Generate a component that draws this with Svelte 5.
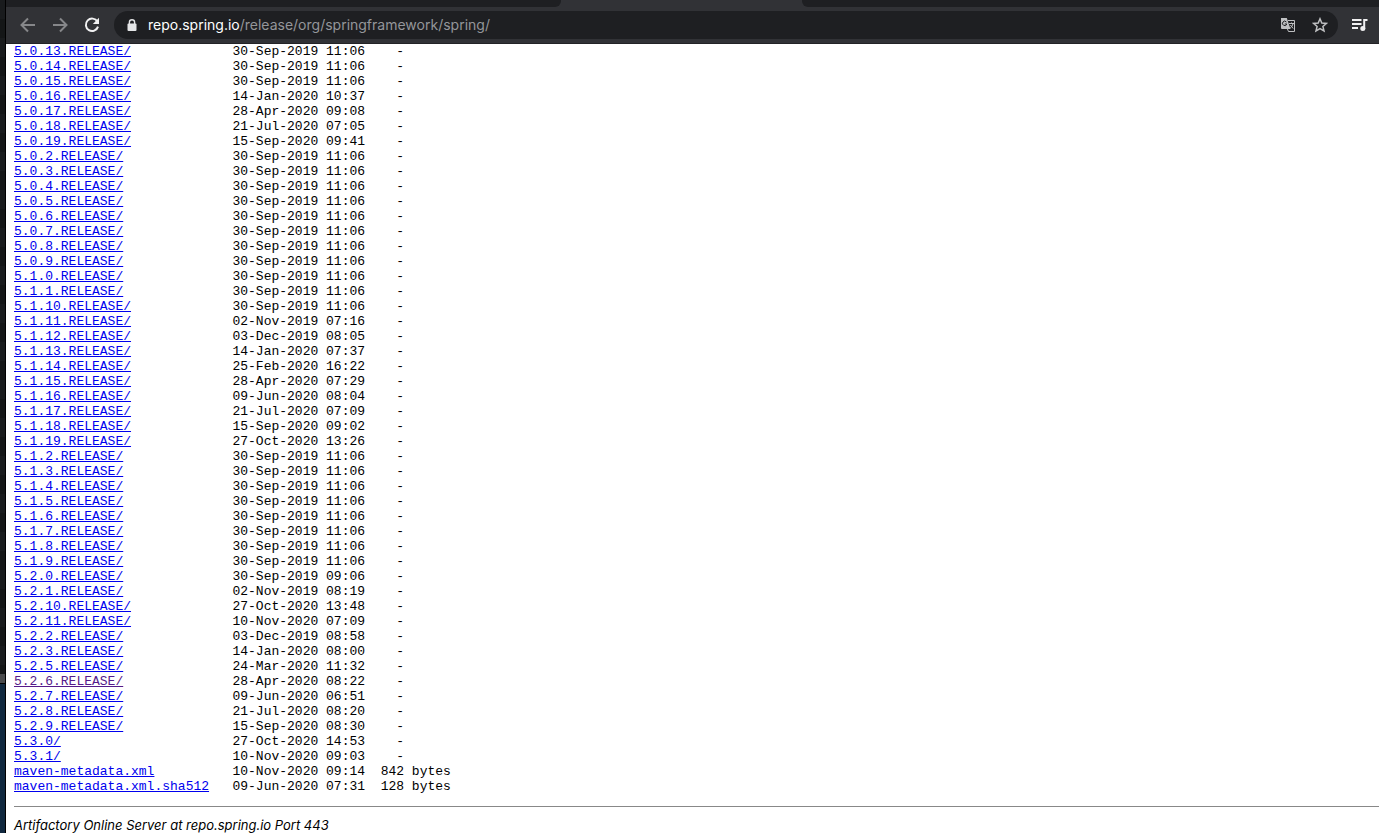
<script>
  const migrated = "30-Sep-2019 11:06";

  const entries = [
    ["5.0.13.RELEASE/", migrated],
    ["5.0.14.RELEASE/", migrated],
    ["5.0.15.RELEASE/", migrated],
    ["5.0.16.RELEASE/", "14-Jan-2020 10:37"],
    ["5.0.17.RELEASE/", "28-Apr-2020 09:08"],
    ["5.0.18.RELEASE/", "21-Jul-2020 07:05"],
    ["5.0.19.RELEASE/", "15-Sep-2020 09:41"],
    ["5.0.2.RELEASE/", migrated],
    ["5.0.3.RELEASE/", migrated],
    ["5.0.4.RELEASE/", migrated],
    ["5.0.5.RELEASE/", migrated],
    ["5.0.6.RELEASE/", migrated],
    ["5.0.7.RELEASE/", migrated],
    ["5.0.8.RELEASE/", migrated],
    ["5.0.9.RELEASE/", migrated],
    ["5.1.0.RELEASE/", migrated],
    ["5.1.1.RELEASE/", migrated],
    ["5.1.10.RELEASE/", migrated],
    ["5.1.11.RELEASE/", "02-Nov-2019 07:16"],
    ["5.1.12.RELEASE/", "03-Dec-2019 08:05"],
    ["5.1.13.RELEASE/", "14-Jan-2020 07:37"],
    ["5.1.14.RELEASE/", "25-Feb-2020 16:22"],
    ["5.1.15.RELEASE/", "28-Apr-2020 07:29"],
    ["5.1.16.RELEASE/", "09-Jun-2020 08:04"],
    ["5.1.17.RELEASE/", "21-Jul-2020 07:09"],
    ["5.1.18.RELEASE/", "15-Sep-2020 09:02"],
    ["5.1.19.RELEASE/", "27-Oct-2020 13:26"],
    ["5.1.2.RELEASE/", migrated],
    ["5.1.3.RELEASE/", migrated],
    ["5.1.4.RELEASE/", migrated],
    ["5.1.5.RELEASE/", migrated],
    ["5.1.6.RELEASE/", migrated],
    ["5.1.7.RELEASE/", migrated],
    ["5.1.8.RELEASE/", migrated],
    ["5.1.9.RELEASE/", migrated],
    ["5.2.0.RELEASE/", "30-Sep-2019 09:06"],
    ["5.2.1.RELEASE/", "02-Nov-2019 08:19"],
    ["5.2.10.RELEASE/", "27-Oct-2020 13:48"],
    ["5.2.11.RELEASE/", "10-Nov-2020 07:09"],
    ["5.2.2.RELEASE/", "03-Dec-2019 08:58"],
    ["5.2.3.RELEASE/", "14-Jan-2020 08:00"],
    ["5.2.5.RELEASE/", "24-Mar-2020 11:32"],
    ["5.2.6.RELEASE/", "28-Apr-2020 08:22"],
    ["5.2.7.RELEASE/", "09-Jun-2020 06:51"],
    ["5.2.8.RELEASE/", "21-Jul-2020 08:20"],
    ["5.2.9.RELEASE/", "15-Sep-2020 08:30"],
    ["5.3.0/", "27-Oct-2020 14:53"],
    ["5.3.1/", "10-Nov-2020 09:03"],
    ["maven-metadata.xml", "10-Nov-2020 09:14", "842 bytes"],
    ["maven-metadata.xml.sha512", "09-Jun-2020 07:31", "128 bytes"]
  ];

  let visited = $state(["5.2.6.RELEASE/"]);

  const open = (e, name) => {
    e.preventDefault();
    visited = [...visited, name];
  };
</script>

<div class="desktop">
  <div class="behind">
    <div class="editor"></div>
    <div class="edge"></div>
  </div>

  <div class="window">
    <div class="tabs">
      <div class="tab-left"></div>
      <div class="tab-active"></div>
      <div class="tab-right"></div>
    </div>

    <div class="toolbar">
      <div class="nav">
        <button class="dim" aria-label="Back">
          <svg width="16" height="16" viewBox="0 0 16 16"><path d="M15 8H2M8 1.5L1.5 8L8 14.5" /></svg>
        </button>
        <button class="dim" aria-label="Forward">
          <svg width="16" height="16" viewBox="0 0 16 16"><path d="M1 8H14M8 1.5L14.5 8L8 14.5" /></svg>
        </button>
        <button aria-label="Reload">
          <svg width="16" height="16" viewBox="0 0 16 16">
            <path d="M13.4 4.6A6.2 6.2 0 1 0 14 9.6" />
            <path class="solid" d="M15 0.8V7H8.8Z" />
          </svg>
        </button>
      </div>

      <div class="omnibox">
        <svg class="lock" width="10" height="13" viewBox="0 0 10 13">
          <path d="M2.4 5V3.3a2.6 2.6 0 0 1 5.2 0V5" />
          <rect x="0.5" y="4.5" width="9" height="7.5" rx="1" />
        </svg>
        <a class="url" href="#spring"><span class="host">repo.spring.io</span>/release/org/springframework/spring/</a>
        <button class="soft" aria-label="Translate this page">
          <svg width="16" height="16" viewBox="0 0 16 16">
            <path class="thin" d="M8 3.5H14.5V14.5H8.5L7 11" />
            <path class="solid" d="M1 1H6.8L10.5 12H2a1 1 0 0 1-1-1Z" />
            <path class="ink" d="M6.4 5A2.2 2.2 0 1 0 6.8 7H4.8" />
            <path class="thin" d="M9 6.5H14M11.5 5.5V6.5M13 6.5C12.6 8.7 11.6 10 10.2 11M10.4 8L13.2 11.5" />
          </svg>
        </button>
        <button class="soft" aria-label="Bookmark this page">
          <svg width="16" height="16" viewBox="0 0 16 16">
            <path class="star" d="M8 1.8L9.8 6L14.4 6.4L10.9 9.4L12 13.9L8 11.5L4 13.9L5.1 9.4L1.6 6.4L6.2 6Z" />
          </svg>
        </button>
      </div>

      <button class="media" aria-label="Media controls">
        <svg width="18" height="14" viewBox="0 0 18 14">
          <path d="M1 2H10.5M1 6H10.5M1 10H7M13.2 11V2H16.5" />
          <circle cx="11.8" cy="10.6" r="2.5" />
        </svg>
      </button>
    </div>

    <main>
      <table>
        <tbody>
          {#each entries as [name, date, size]}
            <tr>
              <td class="name">
                <a href={"#" + name} class:visited={visited.includes(name)} onclick={(e) => open(e, name)}>{name}</a>
              </td>
              <td class="date">{date}</td>
              <td>{size ?? "  -"}</td>
            </tr>
          {/each}
        </tbody>
      </table>
      <hr />
      <address>Artifactory Online Server at repo.spring.io Port 443</address>
    </main>
  </div>
</div>

<style>
  :global(body) {
    margin: 0;
    background: white;
  }

  .desktop {
    display: flex;
    min-height: 100vh;
  }

  .behind {
    display: flex;
    flex-direction: column;
    width: 6px;
    border-right: 1px solid #000;
    box-sizing: border-box;
    background: #10283f;
  }

  .editor {
    flex-basis: 674px;
    background: repeating-linear-gradient(#191b1d 0 19px, #141617 19px 38px);
  }

  .edge {
    height: 9px;
    background: #4a4b4d;
    border-bottom: 1px solid #000;
  }

  .window {
    flex: 1;
    min-width: 0;
  }

  .tabs {
    display: flex;
    height: 7px;
    background: #313236;
  }

  .tab-left {
    flex: 555;
    background: #1e1f22;
    border-bottom-right-radius: 6px;
  }

  .tab-active {
    flex: 241;
  }

  .tab-right {
    flex: 577;
    background: #1e1f22;
    border-bottom-left-radius: 6px;
  }

  .toolbar {
    display: flex;
    align-items: center;
    height: 37px;
    box-sizing: border-box;
    background: #313236;
    border-bottom: 1px solid #232326;
  }

  .nav {
    display: flex;
    gap: 16px;
    padding: 0 14px;
  }

  button {
    display: flex;
    padding: 0;
    border: none;
    background: none;
    color: #f1f1f2;
    cursor: pointer;
  }

  .dim {
    color: #86878a;
  }

  .soft {
    color: #bfc0c2;
  }

  svg {
    fill: none;
    stroke: currentColor;
    stroke-width: 2;
  }

  .solid,
  .lock rect,
  circle {
    fill: currentColor;
    stroke: none;
  }

  .thin {
    stroke-width: 1;
  }

  .star {
    stroke-width: 1.5;
  }

  .ink {
    stroke: #1e1f22;
    stroke-width: 1;
  }

  .lock {
    color: #e4e5e7;
    stroke-width: 1.4;
  }

  .omnibox {
    flex: 1;
    display: flex;
    align-items: center;
    gap: 16px;
    height: 28px;
    padding: 0 10px 0 13px;
    border-radius: 14px;
    background: #1e1f22;
    font: 14px/20px Inter, "Liberation Sans", sans-serif;
  }

  .url {
    flex: 1;
    margin-left: -5px;
    color: #94969a;
    text-decoration: none;
  }

  .host {
    color: #fff;
  }

  .media {
    padding: 0 10px 0 13px;
  }

  main {
    padding-left: 8px;
  }

  table {
    border-collapse: collapse;
    font: 13px/15px "Liberation Mono", monospace;
    color: #000;
  }

  td {
    padding: 0;
    white-space: pre;
  }

  .name {
    width: 28ch;
  }

  .date {
    width: 19ch;
  }

  td a {
    color: #0000ee;
  }

  td a.visited {
    color: #551a8b;
  }

  hr {
    margin: 12px 0 11px;
    border: none;
    border-top: 1px solid #888;
  }

  address {
    font: italic 13px/15px Inter, "Liberation Sans", sans-serif;
    color: #000;
  }
</style>
